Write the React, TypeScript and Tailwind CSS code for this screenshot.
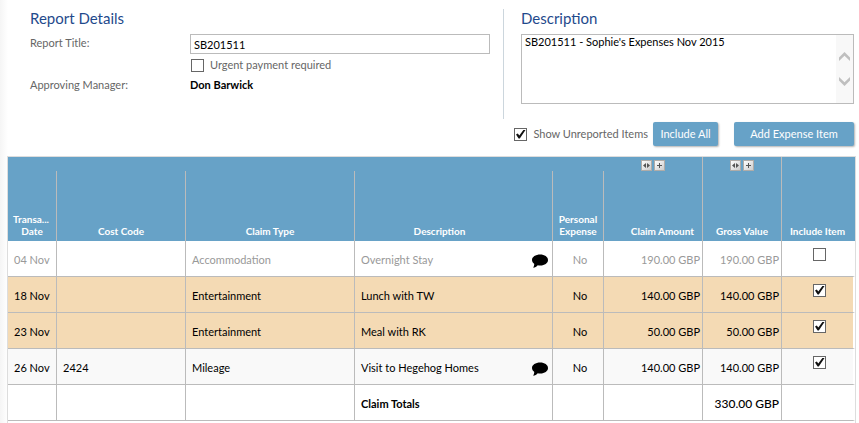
import { useState } from "react";

type Item = {
  date: string;
  costCode: string;
  claimType: string;
  description: string;
  comment: boolean;
  amount: string;
  included: boolean;
  tone: string;
};

const initialItems: Item[] = [
  { date: "04 Nov", costCode: "", claimType: "Accommodation", description: "Overnight Stay", comment: true, amount: "190.00 GBP", included: false, tone: "bg-white text-[#999]" },
  { date: "18 Nov", costCode: "", claimType: "Entertainment", description: "Lunch with TW", comment: false, amount: "140.00 GBP", included: true, tone: "bg-[#f4dab4]" },
  { date: "23 Nov", costCode: "", claimType: "Entertainment", description: "Meal with RK", comment: false, amount: "50.00 GBP", included: true, tone: "bg-[#f4dab4]" },
  { date: "26 Nov", costCode: "2424", claimType: "Mileage", description: "Visit to Hegehog Homes", comment: true, amount: "140.00 GBP", included: true, tone: "bg-[#f9f9f9]" },
];

type CheckboxProps = {
  id?: string;
  label?: string;
  checked: boolean;
  onChange: (checked: boolean) => void;
};

function Checkbox({ id, label, checked, onChange }: CheckboxProps) {
  return (
    <span className="inline-grid size-[13px] shrink-0">
      <input
        id={id}
        type="checkbox"
        aria-label={label}
        checked={checked}
        onChange={(e) => onChange(e.target.checked)}
        className="peer col-start-1 row-start-1 size-[13px] appearance-none border border-[#666] bg-white"
      />
      <svg
        viewBox="0 0 13 13"
        aria-hidden="true"
        className="pointer-events-none invisible col-start-1 row-start-1 size-[13px] peer-checked:visible"
      >
        <path d="M2 6.6 L3.8 5.4 L5.3 7.4 L9.4 2 L11.5 2 L5.8 10.6 L4.6 10.6 Z" fill="#111" />
      </svg>
    </span>
  );
}

function CommentIcon() {
  return (
    <svg viewBox="0 0 16 14" className="h-[14px] w-4 shrink-0" role="img" aria-label="Comment">
      <path d="M8.2 0.5 C12.6 0.5 16 2.9 16 6 C16 9.1 12.6 11.5 8.4 11.5 C7.4 11.5 6.5 11.4 5.7 11.2 C4.6 12.5 3 13.4 1.2 13.8 C1.8 12.6 2.2 11.2 2.3 9.9 C0.9 8.9 0 7.5 0 6 C0 2.9 3.6 0.5 8.2 0.5 Z" fill="#000" />
    </svg>
  );
}

function ColumnTools({ name }: { name: string }) {
  const tool = "size-[11px] border border-[#b0aca8] bg-linear-to-br from-white to-[#ccc]";
  return (
    <div className="flex justify-center gap-[2px]">
      <button type="button" aria-label={"Resize " + name} className={tool}>
        <svg viewBox="0 0 9 9" className="block size-[9px]" aria-hidden="true">
          <path d="M4 2 L1 4.5 L4 7 Z M5 2 L8 4.5 L5 7 Z" fill="#555" />
        </svg>
      </button>
      <button type="button" aria-label={"Expand " + name} className={tool}>
        <svg viewBox="0 0 9 9" className="block size-[9px]" aria-hidden="true">
          <path d="M2 4.5 H7 M4.5 2 V7" stroke="#555" strokeWidth="1" />
        </svg>
      </button>
    </div>
  );
}

export default function App() {
  const [title, setTitle] = useState("SB201511");
  const [urgent, setUrgent] = useState(false);
  const [description, setDescription] = useState("SB201511 - Sophie's Expenses Nov 2015");
  const [showUnreported, setShowUnreported] = useState(true);
  const [items, setItems] = useState(initialItems);

  const setIncluded = (index: number, included: boolean) =>
    setItems(items.map((item, i) => (i === index ? { ...item, included } : item)));

  const button =
    "h-6 rounded-[2px] bg-[#67a2c7] text-[11px] text-white shadow-[1px_1px_2px_rgba(0,0,0,0.3)]";
  const line = "border-r border-[#bbb]";
  const cell = "border-r border-b border-[#bbb] pt-[2px]";
  const lastCell = "border-b border-b-[#bbb] border-r-2 border-r-white";
  const head = "pb-1 align-bottom font-bold";

  return (
    <div className="flex min-h-screen flex-col bg-linear-to-r from-[#f5f5f5] to-white to-[8px] pr-[3px] pl-[7px] font-['Lato','Liberation_Sans',sans-serif] text-[11px] leading-[14px] text-black">
      <div className="flex pt-[9px] pr-[2px]">
        <section className="flex h-[110px] w-[497px] shrink-0 flex-col border-r border-[#ccd6dd] pl-[23px]">
          <h2 className="text-[15px] leading-[18px] text-[#1f4a8c]">Report Details</h2>
          <div className="mt-[7px] flex">
            <label htmlFor="report-title" className="w-40 pt-[2px] text-[#666]">
              Report Title:
            </label>
            <input
              id="report-title"
              value={title}
              onChange={(e) => setTitle(e.target.value)}
              className="h-5 w-[300px] border border-[#bbb] bg-white px-[3px]"
            />
          </div>
          <div className="mt-1 flex items-center gap-[6px] pl-[161px]">
            <Checkbox id="urgent" checked={urgent} onChange={setUrgent} />
            <label htmlFor="urgent" className="text-[#666]">
              Urgent payment required
            </label>
          </div>
          <div className="mt-[6px] flex">
            <span className="w-40 text-[#666]">Approving Manager:</span>
            <span className="font-bold">Don Barwick</span>
          </div>
        </section>
        <section className="min-w-0 flex-1 pl-[17px]">
          <h2 className="text-[15px] leading-[18px] text-[#1f4a8c]">
            <label htmlFor="report-description">Description</label>
          </h2>
          <div className="mt-[7px] flex h-[70px] border border-[#bbb] bg-white">
            <textarea
              id="report-description"
              value={description}
              onChange={(e) => setDescription(e.target.value)}
              className="min-w-0 flex-1 resize-none px-[3px]"
            />
            <div className="flex w-[17px] flex-col items-center justify-center gap-4 bg-[#f8f8f8]" aria-hidden="true">
              <svg viewBox="0 0 11 9" className="h-[9px] w-[11px]">
                <path d="M0 5.4 L5.5 0 L11 5.4 V9 L5.5 3.8 L0 9 Z" fill="#bfbfbf" />
              </svg>
              <svg viewBox="0 0 11 9" className="h-[9px] w-[11px]">
                <path d="M0 3.6 L5.5 9 L11 3.6 V0 L5.5 5.2 L0 0 Z" fill="#bfbfbf" />
              </svg>
            </div>
          </div>
        </section>
      </div>

      <div className="mt-[3px] flex items-center justify-end pr-[2px]">
        <Checkbox id="show-unreported" checked={showUnreported} onChange={setShowUnreported} />
        <label htmlFor="show-unreported" className="pr-[5px] pl-[6px] text-[#666]">
          Show Unreported Items
        </label>
        <button
          type="button"
          onClick={() => setItems(items.map((item) => ({ ...item, included: true })))}
          className={button + " w-[65px]"}
        >
          Include All
        </button>
        <button type="button" className={button + " ml-4 w-[120px]"}>
          Add Expense Item
        </button>
      </div>

      <div className="mt-[10px] flex-1 border-x border-t border-[#ddd] bg-white">
        <table className="w-full table-fixed border-separate border-spacing-0">
          <colgroup>
            <col className="w-[49px]" />
            <col className="w-[129px]" />
            <col className="w-[169px]" />
            <col />
            <col className="w-[51px]" />
            <col className="w-[99px]" />
            <col className="w-[79px]" />
            <col className="w-[73px]" />
          </colgroup>
          <thead className="bg-[#67a2c7] text-[10px] leading-3 text-white">
            <tr className="h-[14px]">
              <td colSpan={5} />
              <td className={line + " pt-[3px]"}>
                <ColumnTools name="Claim Amount" />
              </td>
              <td className={line + " pt-[3px]"}>
                <ColumnTools name="Gross Value" />
              </td>
              <td />
            </tr>
            <tr className="h-[70px]">
              <th className={head + " " + line}>
                <div className="pr-[2px]">Transa...</div>
                <div>Date</div>
              </th>
              <th className={head + " " + line}>Cost Code</th>
              <th className={head + " " + line}>Claim Type</th>
              <th className={head + " pr-7 " + line}>Description</th>
              <th className={head + " " + line}>Personal Expense</th>
              <th className={head + " pr-2 text-right " + line}>Claim Amount</th>
              <th className={head + " " + line}>Gross Value</th>
              <th className={head + " pr-[2px]"}>Include Item</th>
            </tr>
          </thead>
          <tbody>
            {items.map((item, i) => (
              <tr key={item.date} className={"h-9 " + item.tone}>
                <td className={cell + " pl-[6px] whitespace-nowrap"}>{item.date}</td>
                <td className={cell + " pl-[6px]"}>{item.costCode}</td>
                <td className={cell + " pl-[6px]"}>{item.claimType}</td>
                <td className={cell + " pr-1 pl-[6px]"}>
                  <div className="flex items-center justify-between">
                    {item.description}
                    {item.comment && (
                      <span className="pt-[2px]">
                        <CommentIcon />
                      </span>
                    )}
                  </div>
                </td>
                <td className={cell + " pl-1 text-center"}>No</td>
                <td className={cell + " pr-[2px] text-right"}>{item.amount}</td>
                <td className={cell + " pr-[2px] text-right"}>{item.amount}</td>
                <td className={lastCell + " pt-[7px] pl-1 text-center align-top"}>
                  <Checkbox
                    label={"Include item " + item.date}
                    checked={item.included}
                    onChange={(included) => setIncluded(i, included)}
                  />
                </td>
              </tr>
            ))}
            <tr className="h-9">
              <td className={cell} />
              <td className={cell} />
              <td className={cell} />
              <td className={cell + " pl-[6px] font-bold"}>Claim Totals</td>
              <td className={cell} />
              <td className={cell} />
              <td className={cell + " pr-[2px] text-right text-xs font-medium"}>330.00 GBP</td>
              <td className={lastCell} />
            </tr>
          </tbody>
        </table>
      </div>
    </div>
  );
}
